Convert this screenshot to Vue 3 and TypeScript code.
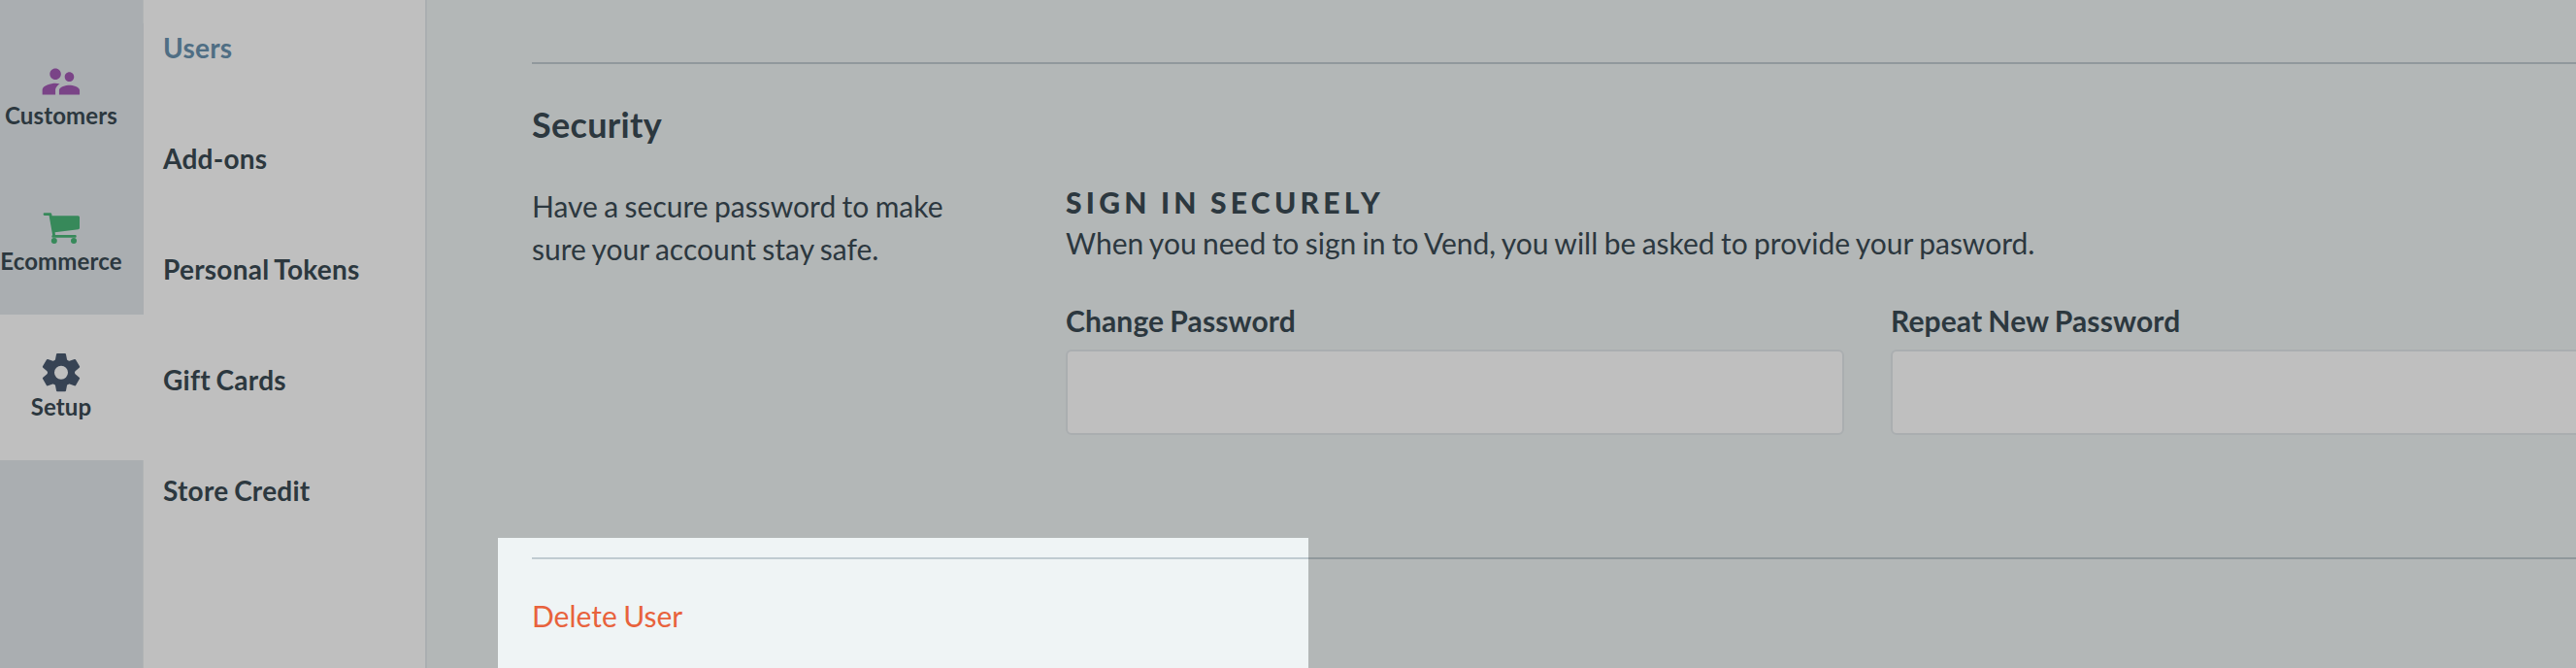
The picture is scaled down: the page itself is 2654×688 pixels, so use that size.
<script setup lang="ts">
interface MenuEntry {
  label: string
  active?: boolean
}

const menu: MenuEntry[] = [
  { label: 'Users', active: true },
  { label: 'Add-ons' },
  { label: 'Personal Tokens' },
  { label: 'Gift Cards' },
  { label: 'Store Credit' },
]

const fields: string[] = ['Change Password', 'Repeat New Password']
const toothAngles: number[] = [0, 60, 120, 180, 240, 300]
</script>

<template>
  <div class="app">
    <nav class="rail">
      <a class="rail-item">
        <svg class="customers" viewBox="0 0 48 48">
          <path
            transform="translate(.8 4.9) scale(1.92)"
            d="M16.5 12c1.38 0 2.49-1.12 2.49-2.5S17.88 7 16.5 7C15.12 7 14 8.12 14 9.5s1.12 2.5 2.5 2.5zM9 11c1.66 0 2.99-1.34 2.99-3S10.66 5 9 5C7.34 5 6 6.34 6 8s1.34 3 3 3zm7.5 3c-1.83 0-5.5.92-5.5 2.75V19h11v-2.25c0-1.83-3.67-2.75-5.5-2.75zM9 13c-2.33 0-7 1.17-7 3.5V19h7v-2.25c0-.85.33-2.34 2.37-3.47C10.5 13.1 9.66 13 9 13z"
          />
        </svg>
        <span>Customers</span>
      </a>
      <a class="rail-item">
        <svg class="cart" viewBox="0 0 48 48">
          <path d="M6.8 13.2H13q1 0 1.200 1l.4 2H41.500q1.500 0 1.500 1.500V28.700q0 1.300-1.300 1.500L17.600 33.200l.4 2.900H38.700q1 0 1 1.350t-1 1.350H15.500q-1.200 0-1.200-1.200 0-1 .8-1.700L11.600 16H6.800q-1.200 0-1.200-1.400t1.200-1.400z" />
          <circle cx="16.800" cy="42" r="3" />
          <circle cx="37" cy="42" r="3" />
        </svg>
        <span>Ecommerce</span>
      </a>
      <a class="rail-item current">
        <svg class="gear" viewBox="0 0 48 48">
          <g transform="translate(24 27.700) scale(.3333)">
            <circle r="31.500" fill="none" stroke="currentColor" stroke-width="21" />
            <path
              v-for="angle in toothAngles"
              :key="angle"
              :transform="`rotate(${angle})`"
              d="M-12-59H12Q14.500-59 15-56L18-40Q20-36 24-34L0-30-24-34Q-20-36-18-40L-15-56Q-14.500-59-12-59Z"
            />
          </g>
        </svg>
        <span>Setup</span>
      </a>
    </nav>

    <aside class="menu">
      <a v-for="entry in menu" :key="entry.label" class="menu-item" :class="{ active: entry.active }">{{ entry.label }}</a>
    </aside>

    <main class="content">
      <section class="security">
        <h2>Security</h2>
        <div class="columns">
          <p class="intro">Have a secure password to make sure your account stay safe.</p>
          <div class="details">
            <h3>SIGN IN SECURELY</h3>
            <p class="hint">When you need to sign in to Vend, you will be asked to provide your pasword.</p>
            <div class="fields">
              <label v-for="field in fields" :key="field" class="field">
                <span>{{ field }}</span>
                <input type="password" />
              </label>
            </div>
          </div>
        </div>
      </section>
      <section class="danger">
        <a class="delete">Delete User</a>
      </section>
    </main>

    <div class="spotlight"></div>
  </div>
</template>

<style>
body {
  margin: 0;
  overflow: hidden;
}
</style>

<style scoped>
.app {
  position: relative;
  display: flex;
  width: 100vw;
  height: 688px;
  overflow: hidden;
  background: #eff4f5;
  color: #3b4b54;
  font-family: Lato, sans-serif;
  font-size: 30px;
  word-spacing: -1.3px;
}
h2,
h3,
p {
  margin: 0;
}
.rail {
  flex: none;
  box-sizing: border-box;
  width: 148px;
  height: 688px;
  padding-top: 24px;
  background: #e3e9ed;
  border-right: 1px solid #edf0f2;
}
.rail-item {
  box-sizing: border-box;
  display: flex;
  flex-direction: column;
  align-items: center;
  width: 148px;
  height: 150px;
  padding: 32px 22px 0 0;
  background: #e3e9ed;
  font-size: 24px;
  font-weight: 700;
  line-height: 30px;
  letter-spacing: 0.15px;
}
.rail-item.current {
  background: #fff;
}
.rail-item svg {
  width: 48px;
  height: 48px;
  fill: currentColor;
}
.customers {
  color: #a35bb5;
}
.cart {
  color: #4ab779;
}
.gear {
  color: #4a5a70;
}
.menu {
  flex: none;
  box-sizing: border-box;
  width: 292px;
  height: 688px;
  background: #fff;
  border-right: 2px solid #e3e9ed;
}
.menu-item {
  display: block;
  height: 114px;
  padding-left: 20px;
  font-size: 28px;
  font-weight: 700;
  line-height: 114px;
  letter-spacing: 0.25px;
}
.menu-item:first-child {
  margin-top: -8px;
}
.active {
  color: #6a93b0;
}
.content {
  flex: none;
  width: 2202px;
  padding: 64px 0 0 108px;
}
.security {
  box-sizing: border-box;
  height: 510px;
  padding-top: 38px;
  border-top: 2px solid #c0cbd1;
}
h2 {
  font-size: 36px;
  font-weight: 700;
  line-height: 48px;
  letter-spacing: 0.3px;
}
.columns {
  display: grid;
  grid-template-columns: 460px 1652px;
  column-gap: 90px;
  margin-top: 38px;
}
.intro {
  line-height: 44px;
}
.details {
  margin-top: -3px;
}
h3 {
  font-size: 30px;
  font-weight: 900;
  line-height: 42px;
  letter-spacing: 4.3px;
}
.hint {
  line-height: 42px;
}
.fields {
  display: grid;
  grid-template-columns: 802px 802px;
  gap: 48px;
  margin-top: 37px;
}
.field {
  display: flex;
  flex-direction: column;
  font-weight: 700;
  letter-spacing: 0.12px;
}
.field span {
  line-height: 44px;
}
.field input {
  box-sizing: border-box;
  width: 100%;
  height: 88px;
  margin: 8px 0 0;
  background: #fff;
  border: 2px solid #e3e8eb;
  border-radius: 6px;
}
.danger {
  padding-top: 38px;
  border-top: 2px solid #c0cbd1;
}
.delete {
  display: block;
  color: #e8623c;
  line-height: 40px;
}
.spotlight {
  position: absolute;
  left: 513px;
  top: 554px;
  width: 835px;
  height: 160px;
  box-shadow: 0 0 0 3000px rgba(0, 0, 0, 0.25);
}
</style>
